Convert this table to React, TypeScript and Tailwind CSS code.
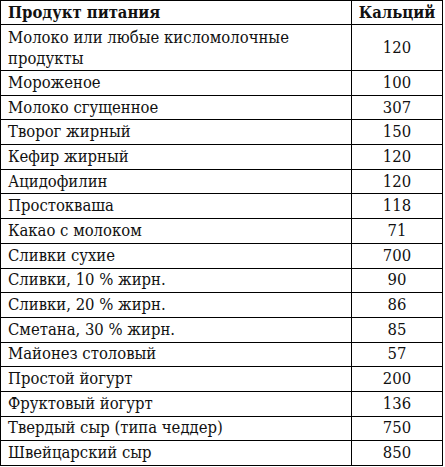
const rows: [string, string][] = [
  ["Мороженое", "100"],
  ["Молоко сгущенное", "307"],
  ["Творог жирный", "150"],
  ["Кефир жирный", "120"],
  ["Ацидофилин", "120"],
  ["Простокваша", "118"],
  ["Какао с молоком", "71"],
  ["Сливки сухие", "700"],
  ["Сливки, 10 % жирн.", "90"],
  ["Сливки, 20 % жирн.", "86"],
  ["Сметана, 30 % жирн.", "85"],
  ["Майонез столовый", "57"],
  ["Простой йогурт", "200"],
  ["Фруктовый йогурт", "136"],
  ["Твердый сыр (типа чеддер)", "750"],
  ["Швейцарский сыр", "850"],
];

export default function App() {
  return (
    <div className="w-[445px] h-[467px] bg-white text-[#111] font-['DejaVu_Serif_Condensed','DejaVu_Serif',serif] font-condensed">
      <table className="w-[443px] border-collapse text-[16.5px] leading-[20px]">
        <tbody>
          <tr className="h-[24px]">
            <td className="border border-black pl-[7px] font-bold">Продукт питания</td>
            <td className="border border-black w-[91px] text-center font-bold">Кальций</td>
          </tr>
          <tr className="h-[46px]">
            <td className="border border-black pl-[7px] leading-[21px]">Молоко или любые кисломолочные<br />продукты</td>
            <td className="border border-black text-center">120</td>
          </tr>
          {rows.map(([name, val]) => (
            <tr key={name} className="h-[24.7px]">
              <td className="border border-black pl-[7px]">{name}</td>
              <td className="border border-black text-center">{val}</td>
            </tr>
          ))}
        </tbody>
      </table>
    </div>
  );
}
